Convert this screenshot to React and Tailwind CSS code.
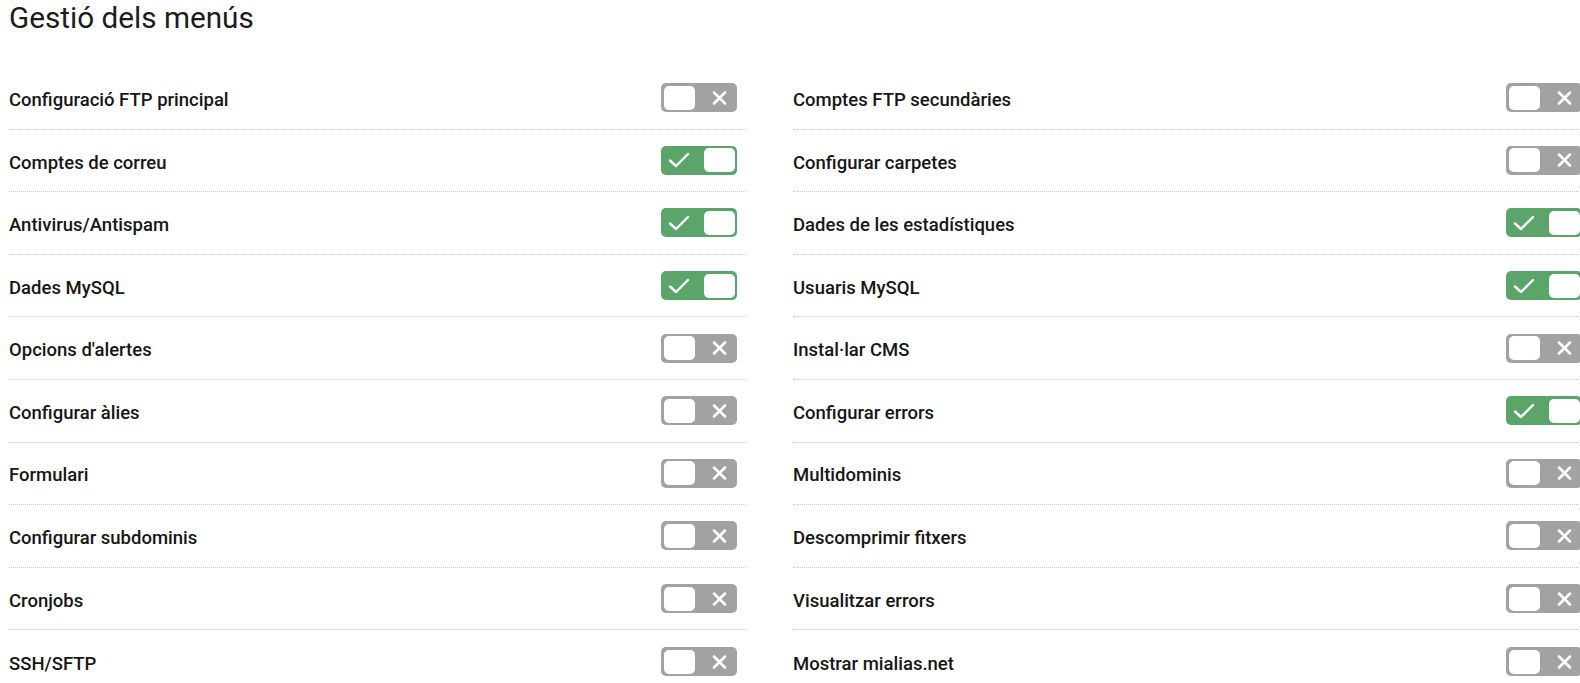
import { useState } from 'react'

const LEFT = [
  ['Configuració FTP principal', false],
  ['Comptes de correu', true],
  ['Antivirus/Antispam', true],
  ['Dades MySQL', true],
  ["Opcions d'alertes", false],
  ['Configurar àlies', false],
  ['Formulari', false],
  ['Configurar subdominis', false],
  ['Cronjobs', false],
  ['SSH/SFTP', false],
]

const RIGHT = [
  ['Comptes FTP secundàries', false],
  ['Configurar carpetes', false],
  ['Dades de les estadístiques', true],
  ['Usuaris MySQL', true],
  ['Instal·lar CMS', false],
  ['Configurar errors', true],
  ['Multidominis', false],
  ['Descomprimir fitxers', false],
  ['Visualitzar errors', false],
  ['Mostrar mialias.net', false],
]

function Toggle({ on, onClick }) {
  return (
    <button
      onClick={onClick}
      className={`flex h-[29px] w-[76px] shrink-0 items-center rounded-[5px] p-[2.5px] mr-[9px] ${on ? 'bg-[#5ba56b]' : 'bg-[#a2a2a2]'}`}
    >
      {on ? (
        <>
          <span className="flex flex-1 justify-center pr-[9px]">
            <svg width="22" height="16" viewBox="0 0 22 16" fill="none" stroke="white" strokeWidth="2.4" strokeLinecap="round" strokeLinejoin="round">
              <path d="M2 8.5 L8 14 L20 2" />
            </svg>
          </span>
          <span className="h-[24px] w-[31px] rounded-[5px] bg-white" />
        </>
      ) : (
        <>
          <span className="h-[24px] w-[31px] rounded-[5px] bg-white" />
          <span className="flex flex-1 justify-center pl-[9px]">
            <svg width="15" height="14" viewBox="0 0 15 14" fill="none" stroke="white" strokeWidth="2.5" strokeLinecap="round">
              <path d="M2 1.5 L13 12.5 M13 1.5 L2 12.5" />
            </svg>
          </span>
        </>
      )}
    </button>
  )
}

function Column({ items, onToggle }) {
  return (
    <div className="flex flex-col">
      {items.map(([label, on], i) => (
        <div
          key={label}
          className={`flex h-[62.6px] items-center justify-between ${i < items.length - 1 ? 'border-b border-dotted border-[#c4c4c4]' : ''}`}
        >
          <span className="mt-[6px] text-[18.5px] font-medium text-[#161616]">{label}</span>
          <Toggle on={on} onClick={() => onToggle(i)} />
        </div>
      ))}
    </div>
  )
}

export default function App() {
  const [left, setLeft] = useState(LEFT)
  const [right, setRight] = useState(RIGHT)

  const flip = (list, setList) => (i) =>
    setList(list.map((it, j) => (j === i ? [it[0], !it[1]] : it)))

  return (
    <div className="h-[683px] w-[1580px] overflow-hidden bg-white" style={{ fontFamily: 'Roboto, "Noto Sans", sans-serif' }}>
      <div className="w-[1591px] pl-[9px]">
        <h1 className="text-[29.7px] leading-[36px] font-normal text-[#1c1c1c]">Gestió dels menús</h1>
        <div className="mt-[31px] grid grid-cols-[737px_798px] gap-x-[47px]">
          <Column items={left} onToggle={flip(left, setLeft)} />
          <Column items={right} onToggle={flip(right, setRight)} />
        </div>
      </div>
    </div>
  )
}
